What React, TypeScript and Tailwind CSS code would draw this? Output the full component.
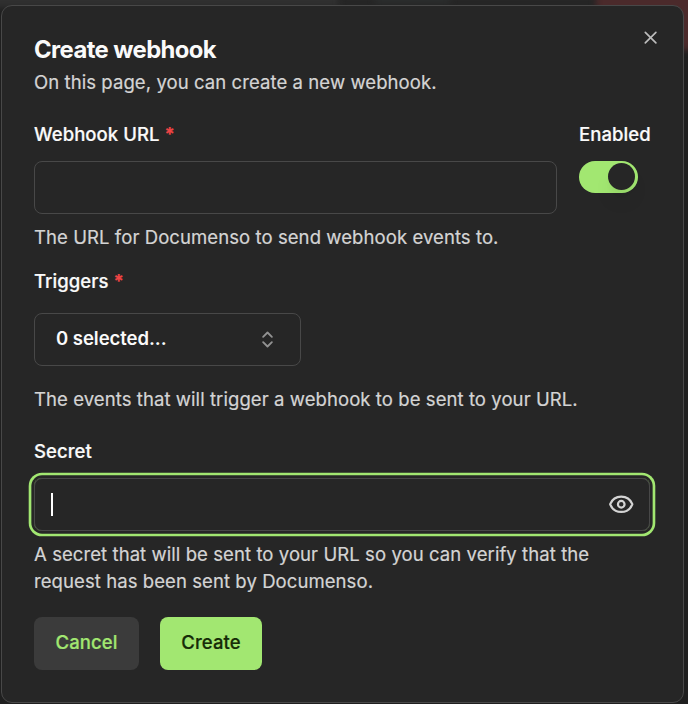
import type { ReactNode } from "react";
import { ChevronsUpDown, Eye, X } from "lucide-react";

function Label({ children, required }: { children: ReactNode; required?: boolean }) {
  return (
    <div className="flex h-[27px] items-center whitespace-nowrap text-[18.55px] font-medium tracking-[0.05px] text-[#fafafa] [-webkit-text-stroke:0.2px]">
      {children}
      {required && <span className="ml-[5px] font-bold text-[#f04444]">*</span>}
    </div>
  );
}

function Help({ children }: { children: ReactNode }) {
  return (
    <p className="text-[18.55px] leading-[27px] tracking-[0.065px] text-[#d4d4d4] [-webkit-text-stroke:0.2px]">
      {children}
    </p>
  );
}

export default function App() {
  return (
    <div className="relative h-[704px] w-[688px] overflow-hidden bg-[#1f1f1f] pl-px pt-[5px] font-['Inter',sans-serif]">
      <div className="absolute -left-2 -top-4 h-6 w-[350px] bg-[#303030] blur-[3px]" />
      <div className="absolute left-[340px] -top-4 h-6 w-[260px] bg-[#262626] blur-[3px]" />
      <div className="absolute left-[375px] -top-4 h-5 w-[75px] bg-[#2b2d2d] blur-[3px]" />
      <div className="absolute left-[596px] -top-4 h-[66px] w-28 bg-[#4b2a2b] blur-[3px]" />
      <div className="relative h-[698px] w-[683px] rounded-[11px] border border-[#484848] bg-[#262626] px-8 pt-8">
        <X className="absolute right-[22px] top-[20.5px] size-[21.2px] text-[#bcbcbc]" strokeWidth={1.9} />

        <h2 className="h-6 whitespace-nowrap text-[23.85px] font-[650] leading-6 tracking-[-0.6px] text-[#fafafa]">
          Create webhook
        </h2>
        <div className="mt-[7px]">
          <Help>On this page, you can create a new webhook.</Help>
        </div>

        <div className="mt-[25px] flex justify-between">
          <div className="w-[523px]">
            <Label required>Webhook URL</Label>
            <div className="mt-[13px] h-[53px] rounded-lg border border-[#484848]" />
          </div>
          <div className="w-[72px]">
            <Label>Enabled</Label>
            <div className="mt-[13px] flex h-8 w-[59px] items-center justify-end rounded-full bg-[#a2e771] pr-[3px]">
              <div className="-mt-px size-[27px] rounded-full bg-[#262626] shadow-[0_13px_20px_-4px_rgba(0,0,0,0.1),0_5px_8px_-5px_rgba(0,0,0,0.1)]" />
            </div>
          </div>
        </div>
        <div className="mt-[10px]">
          <Help>The URL for Documenso to send webhook events to.</Help>
        </div>

        <div className="mt-[17px]">
          <Label required>Triggers</Label>
          <div className="mt-[18px] flex h-[53px] w-[267px] items-center justify-between rounded-lg border border-[#484848] pl-[21px] pr-[22px] text-[18.55px] font-semibold text-[#fafafa]">
            <span className="-mt-px tracking-[-0.05px]">0 selected...</span>
            <ChevronsUpDown className="size-[21px] text-[#929292]" strokeWidth={2.1} />
          </div>
        </div>
        <div className="mt-5">
          <Help>The events that will trigger a webhook to be sent to your URL.</Help>
        </div>

        <div className="mt-[25px]">
          <Label>Secret</Label>
          <div className="mr-px mt-[13px] flex h-[53px] items-center justify-between rounded-lg border border-[#484848] pl-4 pr-[15px] shadow-[0_0_0_2.65px_#262626,0_0_0_5.3px_#a2e771]">
            <span className="h-[23px] w-0.5 bg-white" />
            <Eye className="size-[26.5px] text-[#d4d4d4]" strokeWidth={2} />
          </div>
        </div>
        <div className="mt-[10px]">
          <Help>
            A secret that will be sent to your URL so you can verify that the
            <br />
            request has been sent by Documenso.
          </Help>
        </div>

        <div className="mt-[22px] flex gap-[21px] text-[18.55px] font-medium tracking-[0.05px] [-webkit-text-stroke:0.2px]">
          <button className="h-[53px] w-[105px] rounded-lg bg-[#3b3b3b] pb-0.5 text-[#a2e771]">Cancel</button>
          <button className="h-[53px] w-[102px] rounded-lg bg-[#a2e771] pb-0.5 text-[#162c07]">Create</button>
        </div>
      </div>
    </div>
  );
}
